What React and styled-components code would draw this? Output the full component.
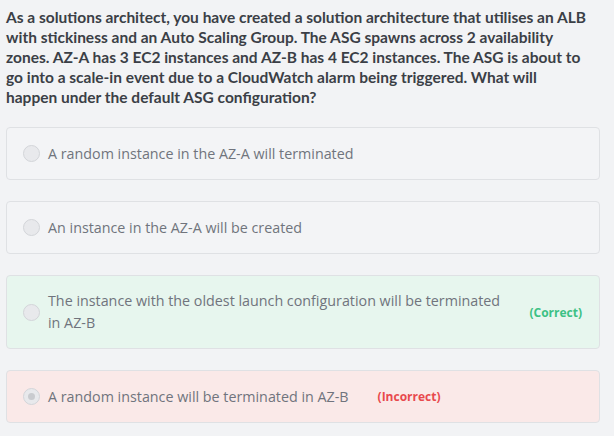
import React from 'react'
import styled, { createGlobalStyle } from 'styled-components'

const GlobalStyle = createGlobalStyle`
  body {
    margin: 0;
    background: #f2f3f5;
    font-family: "Open Sans", "Liberation Sans", sans-serif;
  }
`

const Page = styled.div`
  padding: 7px 6px 0 6px;
  width: 594px;
`

const Question = styled.div`
  font-family: Lato, "Open Sans", sans-serif;
  font-size: 15.5px;
  font-weight: 700;
  line-height: 20px;
  color: #3b3f46;
  margin-bottom: 20px;
  white-space: nowrap;
`

const OptionList = styled.div`
  display: flex;
  flex-direction: column;
  gap: 21px;
`

const variants = {
  plain: '#f3f4f6',
  correct: '#e7f6ee',
  wrong: '#fae9e8',
}

const Option = styled.div`
  display: flex;
  align-items: center;
  min-height: 53px;
  padding: 14px 17px 14px 16px;
  box-sizing: border-box;
  border: 1px solid #dfe1e4;
  border-radius: 4px;
  background: ${props => variants[props.$variant || 'plain']};
`

const Radio = styled.span`
  flex: none;
  width: 15px;
  height: 15px;
  border-radius: 50%;
  border: 1px solid #d3d5d9;
  background: #e8e9ec;
  margin-right: 8px;
  display: flex;
  align-items: center;
  justify-content: center;

  &::after {
    content: '';
    width: 7px;
    height: 7px;
    border-radius: 50%;
    background: ${props => (props.$checked ? '#c9cbcf' : 'transparent')};
  }
`

const OptionText = styled.span`
  font-size: 14.3px;
  line-height: 22px;
  color: #70747d;
`

const Verdict = styled.span`
  flex: none;
  margin-left: 29px;
  font-size: 12px;
  font-weight: 700;
  color: ${props => (props.$ok ? '#3cc184' : '#e8494d')};
`

const questionLines = [
  'As a solutions architect, you have created a solution architecture that utilises an ALB',
  'with stickiness and an Auto Scaling Group. The ASG spawns across 2 availability',
  'zones. AZ-A has 3 EC2 instances and AZ-B has 4 EC2 instances. The ASG is about to',
  'go into a scale-in event due to a CloudWatch alarm being triggered. What will',
  'happen under the default ASG configuration?',
]

const options = [
  { text: 'A random instance in the AZ-A will terminated' },
  { text: 'An instance in the AZ-A will be created' },
  {
    text: 'The instance with the oldest launch configuration will be terminated in AZ-B',
    variant: 'correct',
    verdict: '(Correct)',
    ok: true,
  },
  {
    text: 'A random instance will be terminated in AZ-B',
    variant: 'wrong',
    verdict: '(Incorrect)',
    checked: true,
  },
]

export default function App() {
  return (
    <Page>
      <GlobalStyle />
      <Question>
        {questionLines.map((line, i) => (
          <React.Fragment key={i}>
            {line}
            {i < questionLines.length - 1 && <br />}
          </React.Fragment>
        ))}
      </Question>
      <OptionList>
        {options.map(opt => (
          <Option key={opt.text} $variant={opt.variant}>
            <Radio $checked={opt.checked} />
            <OptionText>{opt.text}</OptionText>
            {opt.verdict && <Verdict $ok={opt.ok}>{opt.verdict}</Verdict>}
          </Option>
        ))}
      </OptionList>
    </Page>
  )
}
